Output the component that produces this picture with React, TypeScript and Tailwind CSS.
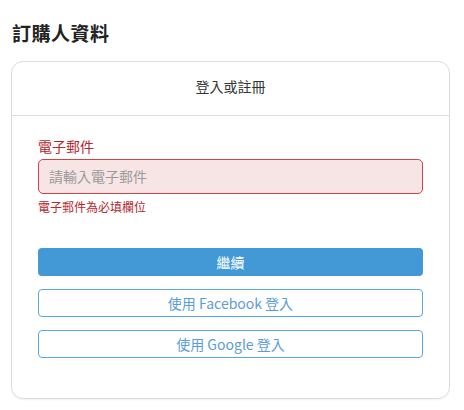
import React from "react";

export default function App() {
  return (
    <div
      className="w-[464px] h-[410px] bg-white pt-[20px]"
      style={{ fontFamily: '"Noto Sans CJK TC", "Noto Sans", sans-serif' }}
    >
      <h1 className="ml-[12px] text-[19px] leading-[26px] font-bold text-[#222] tracking-[0.5px]">
        訂購人資料
      </h1>
      <div className="mt-[15px] ml-[11px] w-[439px] border border-[#dcdcdc] rounded-[12px] shadow-[0_1px_2px_rgba(0,0,0,0.06)]">
        <div className="pt-[14px] pb-[19px] text-center text-[14px] leading-[20px] text-[#333]">
          登入或註冊
        </div>
        <div className="h-px bg-[#dddddd]" />
        <div className="px-[26px] pt-[20px] pb-[40px]">
          <div className="text-[14px] leading-[20px] text-[#b3272d]">電子郵件</div>
          <div className="mt-[3px] h-[35px] rounded-[5px] border border-[#cf4449] bg-[#f7e4e5] flex items-center px-[10px] text-[14px] text-[#9a9a9a]">
            請輸入電子郵件
          </div>
          <div className="mt-[5px] text-[12px] leading-[16px] text-[#b3272d]">電子郵件為必填欄位</div>
          <div className="mt-[33px] flex flex-col gap-[13px]">
            <div className="h-[28px] rounded-[4px] bg-[#4299d6] text-white text-[14px] flex items-center justify-center">
              繼續
            </div>
            <div className="h-[28px] rounded-[4px] border border-[#5aa8e3] text-[#5a9dd6] text-[14px] flex items-center justify-center">
              使用 Facebook 登入
            </div>
            <div className="h-[28px] rounded-[4px] border border-[#5aa8e3] text-[#5a9dd6] text-[14px] flex items-center justify-center">
              使用 Google 登入
            </div>
          </div>
        </div>
      </div>
    </div>
  );
}
